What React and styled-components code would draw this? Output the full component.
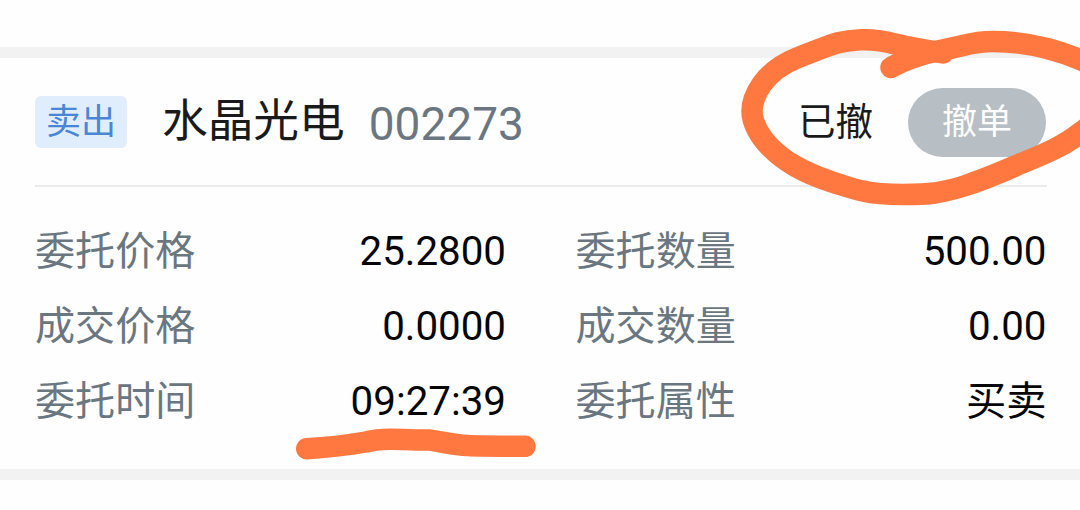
import React from 'react';
import styled, { createGlobalStyle } from 'styled-components';

const order = {
  side: '卖出',
  name: '水晶光电',
  code: '002273',
  status: '已撤',
};

const details = [
  { label: '委托价格', value: '25.2800' },
  { label: '委托数量', value: '500.00' },
  { label: '成交价格', value: '0.0000' },
  { label: '成交数量', value: '0.00' },
  { label: '委托时间', value: '09:27:39' },
  { label: '委托属性', value: '买卖' },
];

const Detail = ({ label, value }) => (
  <DetailItem>
    <DetailLabel>{label}</DetailLabel>
    <DetailValue>{value}</DetailValue>
  </DetailItem>
);

// Hand-drawn highlighter strokes over the card
const Marks = () => (
  <MarksLayer viewBox='0 0 1080 510' aria-hidden='true'>
    <path d='M943 53 C930 51 912 48 895 44 C882 40 871 39.500 861 39.700 C852 40 845 41 837 43 C824 47 810 53 797 58 C781 64.500 770 73 762 84 C755 94 752 102 752 111 C752 124 761 138 770 147 C777 154 786 161 795 166 C807 173 820 178 832 182 C842 185 852 189 863 191 C876 194 890 194.500 903 194.500 C914 194.500 924 194.500 935 193 C947 191 959 188 970 184 C985 179 999 173 1013 167 C1036 157 1060 149 1080 133 C1120 104 1116 74 1080 59.500 C1052 48 1024 41.500 993 41.500 C983 41.500 973 43 963 45.500 C953 48 943 50 933 52 C924 54 915 57 907 60 C901 62 896 65 891 67.500' />
    <path d='M306.700 448.700 C328 447.500 348 445 366 442 C374 440 382 439.300 390 439.300 C403 439.300 417 440 430 440 C443 442 454 445 468 445.600 C490 446 506 446.300 525 446.300' />
  </MarksLayer>
);

const App = () => {
  return (
    <Page>
      <GlobalStyle />
      <Card>
        <Header>
          <SideTag>{order.side}</SideTag>
          <StockName>{order.name}</StockName>
          <StockCode>{order.code}</StockCode>
          <Status>{order.status}</Status>
          <CancelButton type='button'>撤单</CancelButton>
        </Header>
        <Details>
          {details.map((item) => (
            <Detail key={item.label} {...item} />
          ))}
        </Details>
      </Card>
      <Marks />
    </Page>
  );
};

const GlobalStyle = createGlobalStyle`
  * {
    box-sizing: border-box;
  }

  body {
    margin: 0;
    background: #fefefe;
    font-family: Roboto, 'Noto Sans CJK SC', sans-serif;
  }
`;

const Page = styled.main`
  position: relative;
  height: 510px;
  padding-top: 47px;
  overflow: hidden;
`;

const Card = styled.section`
  height: 433px;
  padding: 0 33px 0 35px;
  border-top: 11px solid #f2f2f2;
  border-bottom: 11px solid #f2f2f2;
`;

const Header = styled.header`
  display: flex;
  align-items: center;
  height: 129px;
  padding-right: 1px;
  border-bottom: 2px solid #ebebeb;
`;

const SideTag = styled.span`
  width: 92px;
  height: 52px;
  border-radius: 6px;
  background: #e0edfc;
  color: #4a86d4;
  font-size: 35px;
  line-height: 53px;
  text-align: center;
`;

const StockName = styled.span`
  margin: 1px 24px 0 35px;
  color: #1a1a1a;
  font-size: 45.700px;
  line-height: 60px;
`;

const StockCode = styled.span`
  margin-top: 4px;
  color: #6b7780;
  font-size: 46px;
  line-height: 60px;
`;

const Status = styled.span`
  margin: 0 35px 0 auto;
  color: #1a1a1a;
  font-size: 37.500px;
  line-height: 50px;
`;

const CancelButton = styled.button`
  width: 138px;
  height: 69px;
  margin-top: 2px;
  padding: 0;
  border: 0;
  border-radius: 35px;
  background: #b7bec4;
  color: #fefefe;
  font-family: inherit;
  font-size: 35px;
  line-height: 50px;
`;

const Details = styled.div`
  display: grid;
  grid-template-columns: 471px 471px;
  grid-auto-rows: 75px;
  column-gap: 69.500px;
  padding-top: 27px;
`;

const DetailItem = styled.div`
  display: flex;
  justify-content: space-between;
  font-size: 40.300px;
  line-height: 75px;
`;

const DetailLabel = styled.span`
  color: #6b7780;
  font-size: 40.100px;
`;

const DetailValue = styled.span`
  color: #050505;
`;

const MarksLayer = styled.svg`
  position: absolute;
  top: 0;
  left: 0;
  width: 1080px;
  height: 510px;
  pointer-events: none;

  path {
    fill: none;
    stroke: #ff7840;
    stroke-width: 21.500px;
    stroke-linecap: round;
    stroke-linejoin: round;
  }
`;

export default App;
